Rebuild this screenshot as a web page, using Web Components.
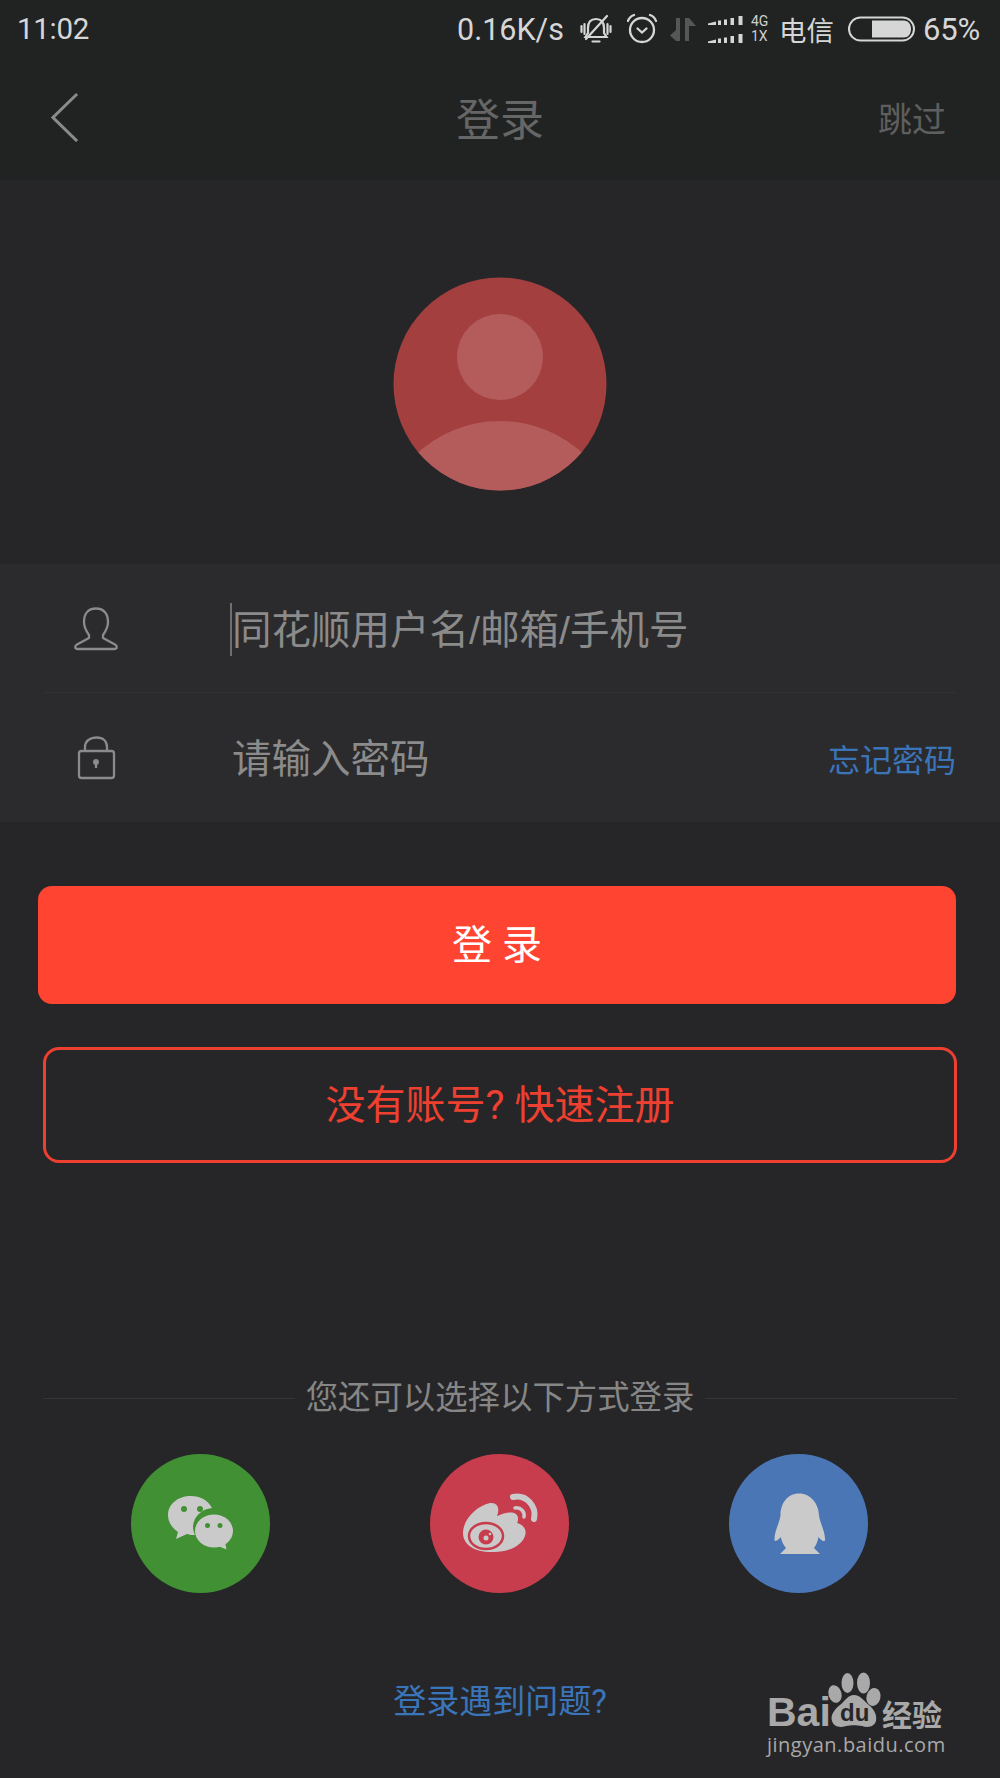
<!DOCTYPE html>
<html lang="zh">
<head>
<meta charset="utf-8">
<title>登录</title>
<style>
  html, body { margin: 0; padding: 0; background: #262628; }
  body { font-family: Roboto, "Noto Sans CJK SC", sans-serif; }
</style>
</head>
<body>
<login-page>
  <status-bar></status-bar>
  <nav-bar title="登录" action="跳过"></nav-bar>
  <avatar-hero></avatar-hero>
  <login-form>
    <form-field icon="user" placeholder="同花顺用户名/邮箱/手机号" focused></form-field>
    <form-field icon="lock" placeholder="请输入密码" link="忘记密码"></form-field>
  </login-form>
  <login-button>登 录</login-button>
  <register-button>没有账号? 快速注册</register-button>
  <or-divider>您还可以选择以下方式登录</or-divider>
  <social-row>
    <social-icon kind="wechat"></social-icon>
    <social-icon kind="weibo"></social-icon>
    <social-icon kind="qq"></social-icon>
  </social-row>
  <help-link>登录遇到问题?</help-link>
  <baidu-mark></baidu-mark>
</login-page>

<script>
const CJK = 'Roboto, "Noto Sans CJK SC", sans-serif';

class LoginPage extends HTMLElement {
  constructor() {
    super();
    this.attachShadow({ mode: 'open' });
    this.shadowRoot.innerHTML = `
      <style>
        :host { display: block; position: relative; width: 1000px; height: 1778px; overflow: hidden; background: #262628; font-family: ${CJK}; }
      </style>
      <slot></slot>
    `;
  }
}

class StatusBar extends HTMLElement {
  constructor() {
    super();
    this.attachShadow({ mode: 'open' });
    this.shadowRoot.innerHTML = `
      <style>
        :host { display: flex; align-items: center; height: 58px; background: #212323; color: #d6d6d6; font-size: 30px; box-sizing: border-box; padding: 0 17px 0 17px; }
        .time { flex: 1; font-size: 29.500px; letter-spacing: -0.3px; }
        .speed { width: 123px; font-size: 30.500px; }
        svg { display: block; flex: none; }
        .net { display: flex; flex-direction: column; width: 28px; font-size: 14px; line-height: 15px; margin-left: 7px; color: #cfcfcf; }
        .carrier { width: 69px; font-size: 27.500px; }
        .pct { margin-left: 7px; width: 60px; font-size: 31px; letter-spacing: -0.2px; }
      </style>
      <span class="time">11:02</span>
      <span class="speed">0.16K/s</span>
      <svg width="32" height="34" viewBox="80 10 32 34" fill="none" stroke="#d6d6d6" stroke-width="2.2" stroke-linecap="round">
        <path d="M96 17C90 17 88 21 88 26V31L85.500 35H106.500L104 31V26C104 21 102 17 96 17Z"/>
        <path d="M86 37L107 14"/>
        <path d="M81.500 24V30M84.500 22V32M107.500 22V32M110.500 24V30"/>
        <path d="M92.500 39.500H99.500"/>
      </svg>
      <svg width="31" height="34" viewBox="127 10 31 34" fill="none" stroke="#d6d6d6" stroke-width="2.3" stroke-linecap="round" style="margin-left:14.500px">
        <circle cx="142" cy="28" r="12"/>
        <path d="M128 19C129 16 131 14 134 13M150 13C153 14 155 16 156 19"/>
        <path d="M137.500 26.500L142 30.500L146.500 26.500"/>
      </svg>
      <svg width="26" height="30" viewBox="170 12 26 30" fill="#555757" style="margin-left:12px">
        <path d="M176 16H180V39H176L170 33.500L176 28Z"/>
        <path d="M185 16H189L196 24H189V39H185Z"/>
      </svg>
      <svg width="36" height="30" viewBox="209 12 36 30" fill="#d6d6d6" style="margin-left:12.500px">
        <path d="M209 21.500L217 19.500V23H209ZM219 18.500H222V23H219ZM225 17.500H228V23H225ZM231.500 16H235V23H231.500ZM239.500 14H243.500V23H239.500Z"/>
        <path d="M209 39.500L217 37.500V41H209ZM219 36.500H222V41H219ZM225 35.500H228V41H225ZM231.500 34H235V41H231.500ZM239.500 32H243.500V41H239.500Z"/>
      </svg>
      <span class="net"><span>4G</span><span>1X</span></span>
      <span class="carrier">电信</span>
      <svg width="68" height="26" viewBox="849 15 68 26" fill="none">
        <rect x="850" y="16.500" width="65" height="23" rx="11.500" stroke="#d6d6d6" stroke-width="2"/>
        <path d="M873 19.500H905C909 19.500 912 23 912 28C912 33 909 36.500 905 36.500H873Z" fill="#d6d6d6"/>
      </svg>
      <span class="pct">65%</span>
    `;
  }
}

class NavBar extends HTMLElement {
  constructor() {
    super();
    this.attachShadow({ mode: 'open' });
    this.shadowRoot.innerHTML = `
      <style>
        :host { display: grid; grid-template-columns: 1fr auto 1fr; align-items: center; height: 122px; background: #212323; padding-bottom: 4px; box-sizing: border-box; }
        .back { padding-left: 51px; display: block; }
        .title { font-size: 44px; color: #666; }
        .action { justify-self: end; font-size: 34px; color: #5e5e5e; padding-right: 54px; }
      </style>
      <svg class="back" width="28" height="50" viewBox="0 0 28 50" fill="none" stroke="#8a8a8a" stroke-width="3" stroke-linecap="square">
        <path d="M25 3L2 25.500L25 48"/>
      </svg>
      <span class="title"></span>
      <span class="action"></span>
    `;
    this.shadowRoot.querySelector('.title').textContent = this.getAttribute('title');
    this.shadowRoot.querySelector('.action').textContent = this.getAttribute('action');
  }
}

class AvatarHero extends HTMLElement {
  constructor() {
    super();
    this.attachShadow({ mode: 'open' });
    this.shadowRoot.innerHTML = `
      <style>
        :host { display: flex; justify-content: center; align-items: flex-start; height: 384px; padding-top: 97px; box-sizing: border-box; background: #262628; }
        svg { display: block; }
      </style>
      <svg width="214" height="214" viewBox="0 0 214 214">
        <defs><clipPath id="c"><circle cx="107" cy="107" r="106.500"/></clipPath></defs>
        <circle cx="107" cy="107" r="106.500" fill="#a43f40"/>
        <g clip-path="url(#c)" fill="#b35c5b">
          <circle cx="107" cy="80" r="43"/>
          <circle cx="107" cy="266" r="122"/>
        </g>
      </svg>
    `;
  }
}

class LoginForm extends HTMLElement {
  constructor() {
    super();
    this.attachShadow({ mode: 'open' });
    this.shadowRoot.innerHTML = `
      <style>
        :host { display: flex; flex-direction: column; background: #2b2b2d; }
      </style>
      <slot></slot>
    `;
  }
}

class FormField extends HTMLElement {
  constructor() {
    super();
    this.attachShadow({ mode: 'open' });
    const icons = {
      user: `<path d="M24 2.500C16 2.500 12 8 12 16C12 22 15 26 17 29V32L5 38.500C2.500 40 2.500 43 6 43H42C45.500 43 45.500 40 43 38.500L31 32V29C33 26 36 22 36 16C36 8 32 2.500 24 2.500Z"/>`,
      lock: `<rect x="7" y="16" width="35" height="27" rx="2.500"/><path d="M13 16V12C13 6 18 2.500 24.500 2.500C31 2.500 35 6 35 12V16"/><circle cx="24" cy="27" r="1.800" fill="#8b8b8b"/><path d="M24 28V33"/>`
    };
    const link = this.getAttribute('link');
    this.shadowRoot.innerHTML = `
      <style>
        :host { display: flex; align-items: center; height: 129px; padding: 0 44px 0 72px; box-sizing: border-box; color: #8b8b8b; position: relative; }
        :host([focused])::after { content: ""; position: absolute; left: 43px; right: 43px; bottom: 0; height: 1px; background: #313133; }
        svg { flex: none; display: block; width: 48px; height: 46px; fill: none; stroke: #8b8b8b; stroke-width: 2.300; stroke-linejoin: round; }
        .text { flex: 1; margin-left: 112px; font-family: "Liberation Sans", "Noto Sans CJK SC", sans-serif; font-size: 39.500px; line-height: 56px; position: relative; white-space: nowrap; }
        .label { position: relative; top: 1px; }
        .caret { position: absolute; left: -2px; top: 2px; width: 2px; height: 53px; background: #6f6f6f; }
        .link { font-size: 32px; color: #3b75b9; }
      </style>
      <svg viewBox="0 0 48 46">${icons[this.getAttribute('icon')]}</svg>
      <span class="text">${this.hasAttribute('focused') ? '<span class="caret"></span>' : ''}<span class="label">${this.getAttribute('placeholder')}</span></span>
      ${link ? `<span class="link">${link}</span>` : ''}
    `;
  }
}

class LoginButton extends HTMLElement {
  constructor() {
    super();
    this.attachShadow({ mode: 'open' });
    this.shadowRoot.innerHTML = `
      <style>
        :host { display: flex; justify-content: center; align-items: center; height: 118px; box-sizing: border-box; padding-bottom: 6px; margin: 64px 44px 0 38px; border-radius: 14px; background: #ff4531; color: #fff; font-size: 40px; }
      </style>
      <slot></slot>
    `;
  }
}

class RegisterButton extends HTMLElement {
  constructor() {
    super();
    this.attachShadow({ mode: 'open' });
    this.shadowRoot.innerHTML = `
      <style>
        :host { display: flex; justify-content: center; align-items: center; height: 116px; box-sizing: border-box; padding-bottom: 6px; margin: 43px 43px 0 43px; border: 3px solid #ee4030; border-radius: 16px; color: #ee4030; font-size: 40px; }
      </style>
      <slot></slot>
    `;
  }
}

class OrDivider extends HTMLElement {
  constructor() {
    super();
    this.attachShadow({ mode: 'open' });
    this.shadowRoot.innerHTML = `
      <style>
        :host { display: flex; align-items: center; gap: 11px; margin: 215px 43px 0 43px; height: 40px; color: #868686; font-size: 32.400px; line-height: 40px; }
        i { flex: 1; height: 1px; background: #353537; }
      </style>
      <i></i><slot></slot><i></i>
    `;
  }
}

class SocialRow extends HTMLElement {
  constructor() {
    super();
    this.attachShadow({ mode: 'open' });
    this.shadowRoot.innerHTML = `
      <style>
        :host { display: grid; grid-template-columns: repeat(3, 299px); justify-items: center; padding-left: 51px; margin-top: 36px; }
      </style>
      <slot></slot>
    `;
  }
}

class SocialIcon extends HTMLElement {
  constructor() {
    super();
    this.attachShadow({ mode: 'open' });
    // each drawing uses the coordinates of a box around the circle, dx is where the circle starts in it
    const art = {
      wechat: { bg: '#419034', dx: 31, svg: `
        <path d="M68 85C68 74 78 66 91 66C100 66 108 70 112 78C102 79 94 86 93 96C93 100 94 103 95 105C92 105 90 105 87 104L76 109L78 102C72 98 68 92 68 85Z"/>
        <ellipse cx="114" cy="101" rx="19" ry="16.500"/>
        <path d="M118 116L126.500 119.500L125 112Z"/>
        <g fill="#419034"><circle cx="84" cy="79" r="3"/><circle cx="100" cy="79" r="3"/><circle cx="107.500" cy="95.500" r="2.500"/><circle cx="120" cy="95.500" r="2.500"/></g>` },
      weibo: { bg: '#c83d4d', dx: 20, svg: `
        <path d="M53 103C53 90 66 76 80 73C88 72 90 79 87 86C96 82 107 80 108 88C108 90 108 92 107 93C114 95 117 100 115 106C111 117 96 123 81 122C65 122 53 115 53 103Z"/>
        <ellipse cx="76" cy="106" rx="17" ry="13" fill="none" stroke="#c83d4d" stroke-width="2.500"/>
        <circle cx="76" cy="107" r="7.500" fill="#c83d4d"/>
        <circle cx="76" cy="108" r="2.500"/>
        <circle cx="80" cy="104" r="1.300"/>
        <path d="M103 67C116 64 127 76 124 89" fill="none" stroke="#cacaca" stroke-width="6" stroke-linecap="round"/>
        <path d="M105 78C111 77 115 82 114 87" fill="none" stroke="#cacaca" stroke-width="3.500" stroke-linecap="round"/>` },
      qq: { bg: '#4b76b5', dx: 19, svg: `
        <path d="M89 63.500C77 63.500 70.500 74 70.500 85C70 92 64 102 64.500 110C65 113 70 108 71 107C71 110 74 116 76 118L70 124H110L104 118C106 116 108 110 108.500 107C110 109 114.500 113 115 110C115.500 102 109.500 92 109 85C108.500 74 101 63.500 89 63.500Z"/>` }
    };
    const a = art[this.getAttribute('kind')];
    this.shadowRoot.innerHTML = `
      <style>
        :host { display: block; width: 139px; height: 139px; border-radius: 50%; background: ${a.bg}; overflow: hidden; }
        svg { display: block; margin: -24px 0 0 -${a.dx}px; fill: #cacaca; }
      </style>
      <svg width="180" height="180" viewBox="0 0 180 180">${a.svg}</svg>
    `;
  }
}

class HelpLink extends HTMLElement {
  constructor() {
    super();
    this.attachShadow({ mode: 'open' });
    this.shadowRoot.innerHTML = `
      <style>
        :host { display: block; margin-top: 89px; text-align: center; color: #3b75b9; font-size: 33px; line-height: 40px; }
      </style>
      <slot></slot>
    `;
  }
}

class BaiduMark extends HTMLElement {
  constructor() {
    super();
    this.attachShadow({ mode: 'open' });
    this.shadowRoot.innerHTML = `
      <style>
        :host { position: absolute; left: 750px; top: 1650px; width: 250px; height: 128px; color: #a9a9a9; }
        svg { display: block; }
        text { font-family: "Liberation Sans", "Noto Sans CJK SC", sans-serif; fill: #a9a9a9; }
      </style>
      <svg width="250" height="128" viewBox="0 0 250 128">
        <text x="17" y="76" font-size="41" font-weight="700">Bai</text>
        <g fill="#a9a9a9">
          <ellipse cx="85" cy="44" rx="6.500" ry="9" transform="rotate(-15 85 44)"/>
          <ellipse cx="97.500" cy="33" rx="6" ry="10"/>
          <ellipse cx="113.500" cy="33" rx="6.500" ry="10.500"/>
          <ellipse cx="123.500" cy="47" rx="7" ry="9" transform="rotate(15 123.500 47)"/>
          <path d="M104 45C110 45 114 51 119 55C125 60 127 66 126 71C124 77 118 78 112 76C106 75 102 75 96 76C90 78 84 77 82 71C80 65 85 59 90 55C95 51 98 45 104 45Z"/>
        </g>
        <text x="90" y="71" font-size="24" font-weight="700" style="fill:#262628">du</text>
        <text x="132" y="76" font-size="30" font-weight="700">经验</text>
        <text x="17" y="102" font-size="20" letter-spacing="0.500" font-weight="400" style="font-family: 'Open Sans', sans-serif">jingyan.baidu.com</text>
      </svg>
    `;
  }
}

customElements.define('login-page', LoginPage);
customElements.define('status-bar', StatusBar);
customElements.define('nav-bar', NavBar);
customElements.define('avatar-hero', AvatarHero);
customElements.define('login-form', LoginForm);
customElements.define('form-field', FormField);
customElements.define('login-button', LoginButton);
customElements.define('register-button', RegisterButton);
customElements.define('or-divider', OrDivider);
customElements.define('social-row', SocialRow);
customElements.define('social-icon', SocialIcon);
customElements.define('help-link', HelpLink);
customElements.define('baidu-mark', BaiduMark);
</script>
</body>
</html>
